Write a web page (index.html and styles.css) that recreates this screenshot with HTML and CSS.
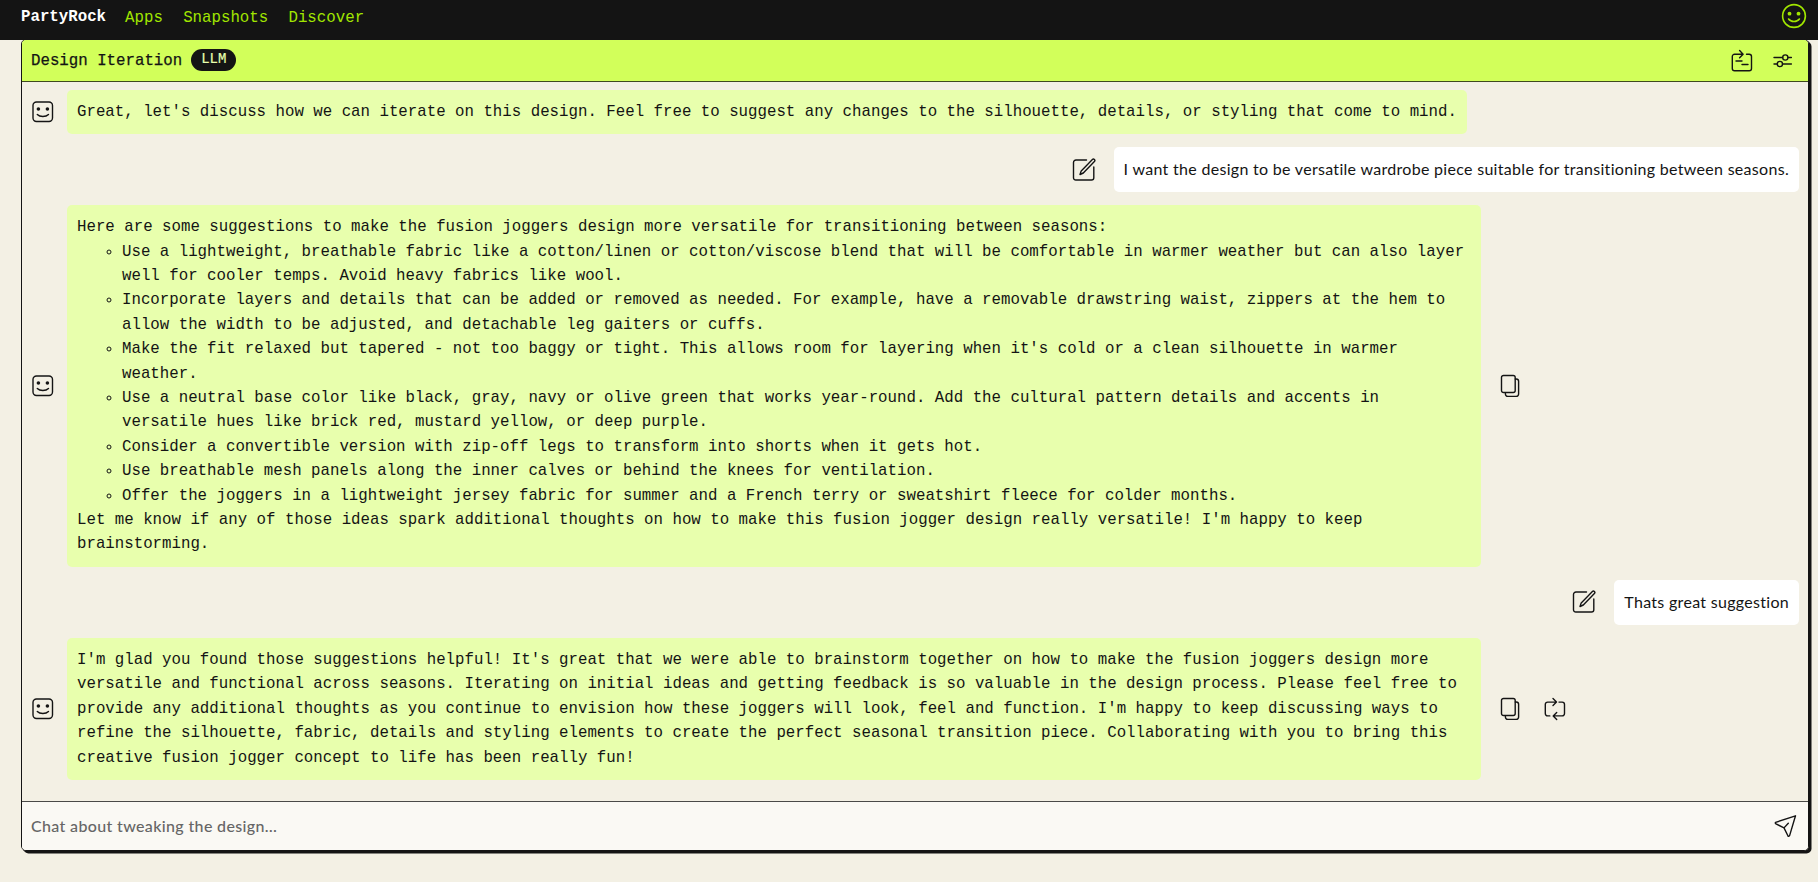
FILE: index.html
```html
<!DOCTYPE html>
<html lang="en">
	<head>
		<meta charset="UTF-8" />
		<meta name="viewport" content="width=device-width, initial-scale=1.0" />
		<title>PartyRock</title>
		<link rel="stylesheet" href="styles.css">
	</head>
	<body>
		<!-- shared icons -->
		<svg class="sprite">
			<symbol id="bot" viewBox="0 0 22 22">
				<rect x="1" y="1" width="19.5" height="19.5" rx="3.5" />
				<circle class="dot" cx="6.4" cy="8" r="1.8" />
				<circle class="dot" cx="15.4" cy="8" r="1.8" />
				<path d="M5.3 13.4c2.6 2.7 8.5 2.7 11.2 0" />
			</symbol>
			<symbol id="edit" viewBox="0 0 24 24">
				<path d="M14.5 2H4a2.5 2.5 0 0 0-2.5 2.5v15.2A2.3 2.3 0 0 0 4 22h15.5a2.3 2.3 0 0 0 2.3-2.3V9" />
				<path d="M8 16.5l1.2-3.6L20.4 1.6a1.4 1.4 0 0 1 2 2L11.3 15z" />
			</symbol>
			<symbol id="copy" viewBox="0 0 20 24">
				<rect x="1.5" y="1.5" width="13.7" height="17" rx="2" />
				<path d="M15.3 5h1a2.3 2.3 0 0 1 2.3 2.3v12.8a2.3 2.3 0 0 1-2.3 2.3H7.7a2.3 2.3 0 0 1-2.3-2.3v-1.5" />
			</symbol>
			<symbol id="redo" viewBox="0 0 22 24">
				<path d="M5.8 18.9H3.6a2.3 2.3 0 0 1-2.3-2.3V7.4a2.3 2.3 0 0 1 2.3-2.3h8.6M9 1.6l3.5 3.5L9 8.6" />
				<path d="M15 5.1h3.2a2.3 2.3 0 0 1 2.3 2.3v9.2a2.3 2.3 0 0 1-2.3 2.3H9.3M12.7 15.4l-3.5 3.5 3.5 3.5" />
			</symbol>
		</svg>

		<header class="header">
			<div class="logo">PartyRock</div>
			<nav class="nav">
				<a href="#">Apps</a>
				<a href="#">Snapshots</a>
				<a href="#">Discover</a>
			</nav>
			<svg class="user" width="26" height="26" viewBox="0 0 26 26">
				<circle cx="13" cy="13" r="11.4" />
				<circle class="dot" cx="8.5" cy="10.7" r="1.9" />
				<circle class="dot" cx="17.5" cy="10.7" r="1.9" />
				<path d="M7.6 16c2.4 3.3 8.4 3.3 10.8 0" />
			</svg>
		</header>

		<main class="card">
			<div class="card-title">
				<h1>Design Iteration</h1>
				<span class="tag">LLM</span>
				<div class="tools">
					<svg class="icon" width="22" height="24" viewBox="0 0 22 24">
						<path d="M11.5 5.2H3.6A2.3 2.3 0 0 0 1.3 7.5v12A2.3 2.3 0 0 0 3.6 21.8h14.6a2.3 2.3 0 0 0 2.3-2.3v-12a2.3 2.3 0 0 0-2.3-2.3h-2.7M8.6 1.6l3.5 3.6-3.5 3.6M5 12h6M11 15.5h6" />
					</svg>
					<svg class="icon" width="20" height="18" viewBox="0 0 20 18">
						<path d="M1 5.5h8.6M15 5.5h3.4M1 12h3.2M9.6 12h8.8" />
						<circle cx="12.3" cy="5.5" r="2.6" />
						<circle cx="6.9" cy="12" r="2.6" />
					</svg>
				</div>
			</div>

			<div class="messages">
				<div class="row">
					<svg class="icon bot"><use href="#bot" /></svg>
					<div class="bubble">Great, let's discuss how we can iterate on this design. Feel free to suggest any changes to the silhouette, details, or styling that come to mind.</div>
				</div>

				<div class="row mine">
					<svg class="icon edit"><use href="#edit" /></svg>
					<div class="bubble">I want the design to be versatile wardrobe piece suitable for transitioning between seasons.</div>
				</div>

				<div class="row">
					<svg class="icon bot"><use href="#bot" /></svg>
					<div class="bubble">
						<p>Here are some suggestions to make the fusion joggers design more versatile for transitioning between seasons:</p>
						<ul>
							<li>Use a lightweight, breathable fabric like a cotton/linen or cotton/viscose blend that will be comfortable in warmer weather but can also layer well for cooler temps. Avoid heavy fabrics like wool.</li>
							<li>Incorporate layers and details that can be added or removed as needed. For example, have a removable drawstring waist, zippers at the hem to allow the width to be adjusted, and detachable leg gaiters or cuffs.</li>
							<li>Make the fit relaxed but tapered - not too baggy or tight. This allows room for layering when it's cold or a clean silhouette in warmer weather.</li>
							<li>Use a neutral base color like black, gray, navy or olive green that works year-round. Add the cultural pattern details and accents in versatile hues like brick red, mustard yellow, or deep purple.</li>
							<li>Consider a convertible version with zip-off legs to transform into shorts when it gets hot.</li>
							<li>Use breathable mesh panels along the inner calves or behind the knees for ventilation.</li>
							<li>Offer the joggers in a lightweight jersey fabric for summer and a French terry or sweatshirt fleece for colder months.</li>
						</ul>
						<p>Let me know if any of those ideas spark additional thoughts on how to make this fusion jogger design really versatile! I'm happy to keep brainstorming.</p>
					</div>
					<div class="actions">
						<svg class="icon copy"><use href="#copy" /></svg>
					</div>
				</div>

				<div class="row mine">
					<svg class="icon edit"><use href="#edit" /></svg>
					<div class="bubble">Thats great suggestion</div>
				</div>

				<div class="row">
					<svg class="icon bot"><use href="#bot" /></svg>
					<div class="bubble">I'm glad you found those suggestions helpful! It's great that we were able to brainstorm together on how to make the fusion joggers design more versatile and functional across seasons. Iterating on initial ideas and getting feedback is so valuable in the design process. Please feel free to provide any additional thoughts as you continue to envision how these joggers will look, feel and function. I'm happy to keep discussing ways to refine the silhouette, fabric, details and styling elements to create the perfect seasonal transition piece. Collaborating with you to bring this creative fusion jogger concept to life has been really fun!</div>
					<div class="actions">
						<svg class="icon copy"><use href="#copy" /></svg>
						<svg class="icon redo"><use href="#redo" /></svg>
					</div>
				</div>
			</div>

			<div class="chat-input">
				<span class="placeholder">Chat about tweaking the design…</span>
				<svg class="icon" width="23" height="24" viewBox="0 0 23 24">
					<path d="M1.6 8.4L21.5 1.8 15.6 21.6c-.3.9-1.3.9-1.7.2L10 13.9 2 9.9c-.8-.4-.9-1.2-.4-1.5zM10 13.9l4.3-4.7" />
				</svg>
			</div>
		</main>
	</body>
</html>
```
FILE: styles.css
```css
* {
	margin: 0;
	padding: 0;
	box-sizing: border-box;
}
body {
	min-height: 882px;
	background-color: #f3f0e4;
	color: #141414;
	font: 15.75px/24.4px "Liberation Mono", monospace;
}
.sprite {
	display: none;
}
svg {
	display: block;
	flex-shrink: 0;
	fill: none;
	stroke: #141414;
	stroke-width: 1.4;
	stroke-linecap: round;
	stroke-linejoin: round;
}
.dot {
	fill: #141414;
	stroke: none;
}

/* header */
.header {
	position: relative;
	z-index: 1;
	display: flex;
	align-items: flex-start;
	height: 40px;
	padding: 3px 11px 0 21px;
	background-color: #141414;
}
.logo {
	color: #fff;
	font-weight: bold;
	margin-top: 2px;
}
.nav {
	display: flex;
	gap: 20.25px;
	margin: 3px 0 0 19px;
}
.nav a {
	color: #a1e600;
	text-decoration: none;
}
.user {
	margin-left: auto;
	stroke: #a1e600;
	stroke-width: 1.6;
}
.user .dot {
	fill: #a1e600;
}

/* card */
.card {
	display: flex;
	flex-direction: column;
	width: 1788px;
	height: 812px;
	margin: -1px 0 0 21px;
	border: 1px solid #141414;
	border-radius: 5px;
	box-shadow: 1px 1px 0 #141414, 2.5px 2.5px 0 #141414;
	overflow: hidden;
}
.card-title {
	display: flex;
	align-items: center;
	height: 42px;
	padding: 0 15px 0 9px;
	background-color: #d2ff5a;
	border-bottom: 1px solid #3f4a1f;
}
.card-title h1 {
	padding-top: 2px;
	font-size: 15.75px;
	font-weight: normal;
	-webkit-text-stroke: 0.25px #141414;
}
.tag {
	width: 45px;
	height: 22px;
	margin: -1px 0 0 9px;
	border-radius: 11px;
	background-color: #141414;
	color: #e8ffad;
	font-size: 14px;
	line-height: 21px;
	text-align: center;
	-webkit-text-stroke: 0.2px #e8ffad;
}
.tools {
	display: flex;
	align-items: center;
	gap: 20px;
	margin-left: auto;
}

/* messages */
.messages {
	flex: 1;
	display: flex;
	flex-direction: column;
	gap: 13.4px;
	padding: 7.5px 9px 0;
}
.row {
	display: flex;
	align-items: center;
}
.bubble {
	max-width: 1414px;
	padding: 10px;
	border-radius: 5px;
	background-color: #e8ffad;
}
.bubble ul {
	padding-left: 45px;
	list-style: circle;
}
.bot {
	width: 22px;
	height: 22px;
	margin: 1px 13px 0 1px;
}
.mine {
	justify-content: flex-end;
}
.mine .bubble {
	background-color: #fff;
	font-family: Lato, sans-serif;
	font-size: 16px;
	letter-spacing: 0.3px;
}
.edit {
	width: 24px;
	height: 24px;
	margin-right: 18px;
}
.actions {
	display: flex;
	align-items: center;
	gap: 24px;
	margin-left: 19px;
}
.copy {
	width: 20px;
	height: 24px;
}
.redo {
	width: 22px;
	height: 24px;
}

/* input */
.chat-input {
	display: flex;
	align-items: center;
	justify-content: space-between;
	height: 49px;
	padding: 0 11px 0 9px;
	border-top: 1px solid #4a4a48;
	background-color: #faf9f4;
}
.placeholder {
	color: #666;
	font: 500 16px/24px Lato, sans-serif;
	letter-spacing: 0.35px;
}
```
